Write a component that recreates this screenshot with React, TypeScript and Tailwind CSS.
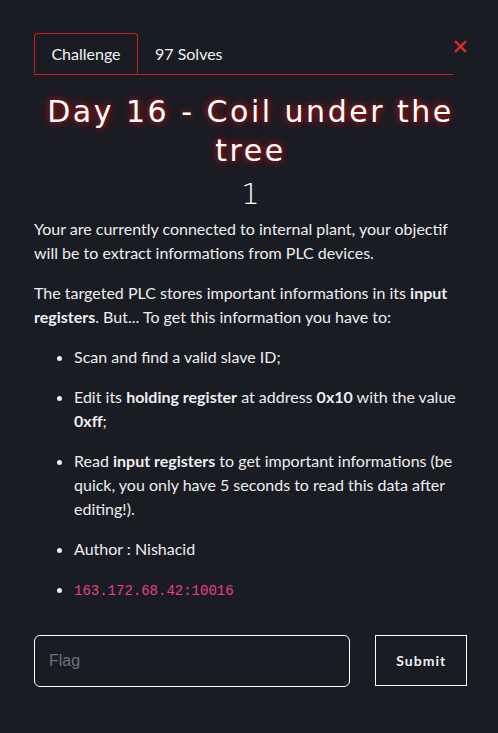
import { useState } from "react";

export default function App() {
  const [flag, setFlag] = useState<string>("")

  return (
    <div className="w-[498px] h-[733px] bg-[#1a1c24] border-l border-[#2a1418] text-[#f2f2f2] font-['Lato','Noto_Sans',sans-serif] overflow-hidden">
      <div className="px-[33px] pt-[33px] w-[499px]">
        {/* tabs */}
        <div className="flex items-start">
          <div className="flex flex-1 border-b border-[#d41a1a]">
            <button className="h-[41px] w-[104px] -mb-px border border-[#d41a1a] border-b-[#1a1c24] rounded-t-[4px] text-[16px] text-[#f2f2f2]">Challenge</button>
            <button className="h-[41px] px-[17px] text-[16px] text-[#f2f2f2]">97 Solves</button>
          </div>
          <button className="mt-[7px] ml-[1px] w-[13px] h-[13px]">
            <svg viewBox="0 0 14 14" className="w-[13px] h-[13px]">
              <path d="M2 2 L12 12 M12 2 L2 12" stroke="#e02828" strokeWidth="2.6" strokeLinecap="square" />
            </svg>
          </button>
        </div>

        {/* title */}
        <h2 className="mt-[17px] text-center font-['DejaVu_Sans',sans-serif] text-[30px] leading-[39px] tracking-[2.5px] text-white [text-shadow:0_0_6px_#b01818,0_0_12px_#8a1010]">
          Day 16 - Coil under the tree
        </h2>
        <h3 className="text-center font-['DejaVu_Sans',sans-serif] text-[29px] leading-[36px] font-light text-white mt-[6px]">1</h3>

        {/* description */}
        <div className="mt-[5px] text-[16px] leading-[24px] text-[#eeeeee]">
          <p>Your are currently connected to internal plant, your objectif will be to extract informations from PLC devices.</p>
          <p className="mt-[16px]">
            The targeted PLC stores important informations in its <b>input registers</b>. But... To get this information you have to:
          </p>
          <ul className="mt-[16px] pl-[40px] list-disc space-y-[16px]">
            <li>Scan and find a valid slave ID;</li>
            <li>Edit its <b>holding register</b> at address <b>0x10</b> with the value <b>0xff</b>;</li>
            <li>Read <b>input registers</b> to get important informations (be quick, you only have 5 seconds to read this data after editing!).</li>
            <li>Author : Nishacid</li>
            <li><code className="font-['Liberation_Mono',monospace] text-[14px] text-[#e83e8c]">163.172.68.42:10016</code></li>
          </ul>
        </div>

        {/* flag form */}
        <div className="mt-[32px] flex items-start gap-[25px]">
          <input
            value={flag}
            onChange={e => setFlag(e.target.value)}
            placeholder="Flag"
            className="w-[318px] h-[52px] rounded-[6px] border border-white bg-transparent px-[14px] text-[16px] font-['Liberation_Sans',sans-serif] text-white placeholder:text-[#6c707a] outline-none"
          />
          <button className="w-[92px] h-[51px] border border-white text-[14px] font-bold tracking-[1px] text-[#eeeeee]">Submit</button>
        </div>
      </div>
    </div>
  )
}
